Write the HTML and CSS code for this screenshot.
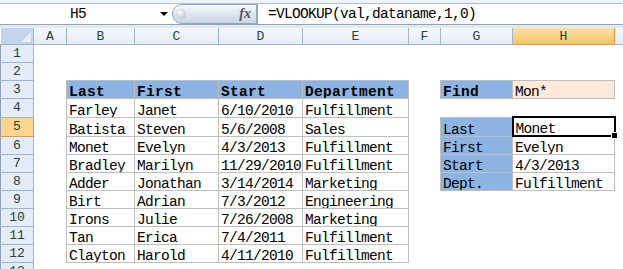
FILE: index.html
```html
<!DOCTYPE html>
<html lang="en">
<head>
    <meta charset="UTF-8">
    <title>VLOOKUP with wildcard</title>
    <link rel="stylesheet" href="styles.css">
</head>
<body>

    <div class="formula-bar">
        <div class="name-box">
            <span class="cell-ref">H5</span>
            <span class="drop"></span>
        </div>
        <div class="fx-pill">
            <span class="knob"></span>
            <span class="fx">fx</span>
        </div>
        <div class="formula">=VLOOKUP(val,dataname,1,0)</div>
    </div>
    <div class="strip"></div>

    <table class="sheet">
        <colgroup>
            <col class="c-row">
            <col class="c-a">
            <col class="c-b">
            <col class="c-c">
            <col class="c-d">
            <col class="c-e">
            <col class="c-f">
            <col class="c-g">
            <col class="c-h">
            <col class="c-i">
        </colgroup>
        <tr class="heads">
            <th class="corner"><span class="tri"></span></th>
            <th class="col">A</th>
            <th class="col">B</th>
            <th class="col">C</th>
            <th class="col">D</th>
            <th class="col">E</th>
            <th class="col">F</th>
            <th class="col">G</th>
            <th class="col sel">H</th>
            <th class="col"></th>
        </tr>
        <tr>
            <th class="row">1</th>
            <td></td><td></td><td></td><td></td><td></td><td></td><td></td><td></td><td></td>
        </tr>
        <tr>
            <th class="row">2</th>
            <td></td><td></td><td></td><td></td><td></td><td></td><td></td><td></td><td></td>
        </tr>
        <tr>
            <th class="row">3</th>
            <td></td>
            <td class="t hd">Last</td>
            <td class="t hd">First</td>
            <td class="t hd">Start</td>
            <td class="t hd">Department</td>
            <td></td>
            <td class="t hd">Find</td>
            <td class="t find">Mon*</td>
            <td></td>
        </tr>
        <tr>
            <th class="row">4</th>
            <td></td>
            <td class="t">Farley</td>
            <td class="t">Janet</td>
            <td class="t">6/10/2010</td>
            <td class="t">Fulfillment</td>
            <td></td><td></td><td></td><td></td>
        </tr>
        <tr>
            <th class="row sel">5</th>
            <td></td>
            <td class="t">Batista</td>
            <td class="t">Steven</td>
            <td class="t">5/6/2008</td>
            <td class="t">Sales</td>
            <td></td>
            <td class="t lab">Last</td>
            <td class="t act">Monet<span class="handle"></span></td>
            <td></td>
        </tr>
        <tr>
            <th class="row">6</th>
            <td></td>
            <td class="t">Monet</td>
            <td class="t">Evelyn</td>
            <td class="t">4/3/2013</td>
            <td class="t">Fulfillment</td>
            <td></td>
            <td class="t lab">First</td>
            <td class="t">Evelyn</td>
            <td></td>
        </tr>
        <tr>
            <th class="row">7</th>
            <td></td>
            <td class="t">Bradley</td>
            <td class="t">Marilyn</td>
            <td class="t">11/29/2010</td>
            <td class="t">Fulfillment</td>
            <td></td>
            <td class="t lab">Start</td>
            <td class="t">4/3/2013</td>
            <td></td>
        </tr>
        <tr>
            <th class="row">8</th>
            <td></td>
            <td class="t">Adder</td>
            <td class="t">Jonathan</td>
            <td class="t">3/14/2014</td>
            <td class="t">Marketing</td>
            <td></td>
            <td class="t lab">Dept.</td>
            <td class="t">Fulfillment</td>
            <td></td>
        </tr>
        <tr>
            <th class="row">9</th>
            <td></td>
            <td class="t">Birt</td>
            <td class="t">Adrian</td>
            <td class="t">7/3/2012</td>
            <td class="t">Engineering</td>
            <td></td><td></td><td></td><td></td>
        </tr>
        <tr>
            <th class="row">10</th>
            <td></td>
            <td class="t">Irons</td>
            <td class="t">Julie</td>
            <td class="t">7/26/2008</td>
            <td class="t">Marketing</td>
            <td></td><td></td><td></td><td></td>
        </tr>
        <tr>
            <th class="row">11</th>
            <td></td>
            <td class="t">Tan</td>
            <td class="t">Erica</td>
            <td class="t">7/4/2011</td>
            <td class="t">Fulfillment</td>
            <td></td><td></td><td></td><td></td>
        </tr>
        <tr>
            <th class="row">12</th>
            <td></td>
            <td class="t">Clayton</td>
            <td class="t">Harold</td>
            <td class="t">4/11/2010</td>
            <td class="t">Fulfillment</td>
            <td></td><td></td><td></td><td></td>
        </tr>
        <tr>
            <th class="row">13</th>
            <td></td><td></td><td></td><td></td><td></td><td></td><td></td><td></td><td></td>
        </tr>
    </table>

</body>
</html>
```

FILE: styles.css
```css
body {
    margin: 0;
    padding: 0;
    background-color: #fff;
    font-family: "Liberation Mono", "DejaVu Sans Mono", monospace;
    overflow: hidden;
    height: 269px;
}
.formula-bar {
    display: flex;
    height: 20px;
    border-top: 1px solid #a9c0da;
    border-bottom: 1px solid #8fa3bd;
    margin-top: 3px;
    background-color: #fff;
    box-shadow: 0 -3px 0 #eef3f9;
}
.name-box {
    width: 172px;
    display: flex;
    align-items: center;
}
.cell-ref {
    width: 156px;
    text-align: center;
    font-size: 14.5px;
    letter-spacing: -0.7px;
}
.drop {
    width: 0;
    height: 0;
    border-left: 4px solid transparent;
    border-right: 4px solid transparent;
    border-top: 4px solid #000;
    margin-left: 4px;
}
.fx-pill {
    width: 75px;
    height: 18px;
    border: 1px solid #8fa7c4;
    border-radius: 10px 0 0 10px;
    background: linear-gradient(#f7f9fc, #dbe5f1 55%, #c9d6e7);
    display: flex;
    align-items: center;
    justify-content: space-between;
    padding: 0 5px 0 3px;
}
.knob {
    width: 10px;
    height: 10px;
    border-radius: 50%;
    background: radial-gradient(circle at 40% 35%, #fff, #c4c9d1 70%, #a9b0ba);
}
.fx {
    font-family: "Liberation Serif", serif;
    font-style: italic;
    font-weight: bold;
    font-size: 14px;
    color: #555;
}
.formula {
    flex: 1;
    padding-left: 10px;
    font-size: 14.5px;
    letter-spacing: -0.7px;
    line-height: 20px;
    border-left: 1px solid #8fa7c4;
}
.strip {
    height: 3px;
    background-color: #e3eaf3;
}
.sheet {
    border-collapse: collapse;
    table-layout: fixed;
    width: 660px;
}
.c-row { width: 33px; }
.c-a { width: 33px; }
.c-b { width: 68px; }
.c-c { width: 84px; }
.c-d { width: 84px; }
.c-e { width: 106px; }
.c-f { width: 32px; }
.c-g { width: 72px; }
.c-h { width: 102px; }
.c-i { width: 46px; }
.sheet td,
.sheet th {
    padding: 0 0 0 2px;
    height: 17px;
    line-height: 12px;
    vertical-align: bottom;
    white-space: nowrap;
    overflow: hidden;
    font-size: 14.5px;
    letter-spacing: -0.7px;
    text-align: left;
    font-weight: normal;
    color: #000;
}
.sheet th.col {
    height: 16px;
    line-height: 15px;
    text-align: center;
    padding: 0;
    vertical-align: middle;
    font-size: 13px;
    letter-spacing: 0;
    color: #27413e;
    background: linear-gradient(#f6f9fc, #e4ebf4);
    border-right: 1px solid #9eb6ce;
    border-bottom: 1px solid #9eb6ce;
}
.sheet th.col.sel {
    background: linear-gradient(#fadfa9, #f3c568);
    border: 1px solid #f29536;
    border-top: none;
}
.sheet th.corner {
    position: relative;
    height: 16px;
    padding: 0;
    background-color: #c3d5ed;
    border-right: 1px solid #9eb6ce;
    border-bottom: 1px solid #9eb6ce;
}
.tri {
    position: absolute;
    right: 2px;
    bottom: 2px;
    width: 0;
    height: 0;
    border-left: 10px solid transparent;
    border-bottom: 10px solid #e6eef8;
}
.sheet th.row {
    text-align: center;
    padding: 0;
    line-height: 15px;
    vertical-align: middle;
    font-size: 13px;
    letter-spacing: 0;
    color: #27413e;
    background-color: #e4ecf7;
    border-left: 1px solid #8e9fb5;
    border-right: 1px solid #9eb6ce;
    border-bottom: 1px solid #9eb6ce;
}
.sheet th.row.sel {
    background-color: #fed58f;
    border: 1px solid #f29536;
    border-left: 1px solid #8e9fb5;
}
.sheet td.t {
    border: 1px solid #bfbfbf;
}
.sheet td.hd {
    background-color: #8db4e2;
    font-weight: bold;
    letter-spacing: 0.3px;
}
.sheet td.lab {
    background-color: #8db4e2;
}
.sheet td.find {
    background-color: #fde9d9;
}
.sheet td.act {
    position: relative;
    overflow: visible;
    border: 2px solid #000;
}
.handle {
    position: absolute;
    right: -4px;
    bottom: -4px;
    width: 5px;
    height: 5px;
    background-color: #000;
    border: 1px solid #fff;
}
```
